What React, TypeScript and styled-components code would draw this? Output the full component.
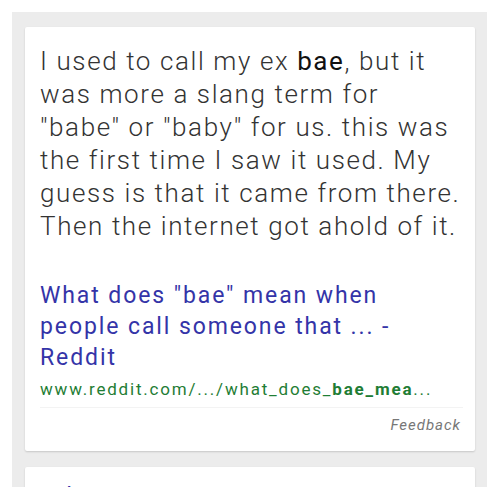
import React from 'react';
import styled, { createGlobalStyle } from 'styled-components';

const GlobalStyle = createGlobalStyle`
  html, body {
    margin: 0;
    padding: 0;
    background: #ffffff;
  }
  body {
    font-family: Roboto, "Noto Sans", Arial, sans-serif;
  }
`;

const Panel = styled.div`
  margin: 12px;
  width: 475px;
  height: 475px;
  box-sizing: border-box;
  padding: 15px 12px 0 13px;
  background: #ececec;
  overflow: hidden;
`;

const Card = styled.div`
  background: #ffffff;
  border-radius: 2px;
  box-shadow: 0 1px 2px rgba(0, 0, 0, 0.16);
  margin-bottom: 16px;
`;

const Body = styled.div`
  padding: 18px 12px 0 15px;
`;

const Snippet = styled.p`
  margin: 0;
  font-size: 26px;
  line-height: 33px;
  font-weight: 300;
  letter-spacing: 1.6px;
  color: #333333;
`;

const Strong = styled.b`
  font-weight: 400;
  color: #111111;
`;

const Title = styled.a`
  display: block;
  margin-top: 37px;
  font-size: 23px;
  line-height: 31px;
  letter-spacing: 1.9px;
  color: #3434a8;
  text-decoration: none;
`;

const Url = styled.div`
  margin-top: 5px;
  font-size: 17px;
  line-height: 22px;
  letter-spacing: 1.8px;
  color: #1f7d35;
  white-space: nowrap;
  padding-bottom: 7px;
  border-bottom: 1px solid #f3f3f3;
`;

const Footer = styled.div`
  display: flex;
  justify-content: flex-end;
  padding: 8px 14px 17px 0;
`;

const Feedback = styled.span`
  font-size: 15px;
  font-style: italic;
  letter-spacing: 1px;
  color: #777777;
`;

const NextTitle = styled.div`
  padding: 14px 16px 0 15px;
  font-size: 23px;
  line-height: 31px;
  letter-spacing: 1.9px;
  color: #3434a8;
`;

export default function App() {
  return (
    <>
      <GlobalStyle />
      <Panel>
        <Card>
          <Body>
            <Snippet>
              I used to call my ex <Strong>bae</Strong>, but it was more a slang term for
              "babe" or "baby" for us. this was the first time I saw it used. My guess is that
              it came from there. Then the internet got ahold of it.
            </Snippet>
            <Title href="#">What does "bae" mean when people call someone that ... - Reddit</Title>
            <Url>
              www.reddit.com/.../what_does_<b>bae_mea</b>...
            </Url>
          </Body>
          <Footer>
            <Feedback>Feedback</Feedback>
          </Footer>
        </Card>
        <Card>
          <NextTitle>Urban Dictionary: Bae</NextTitle>
        </Card>
      </Panel>
    </>
  );
}
